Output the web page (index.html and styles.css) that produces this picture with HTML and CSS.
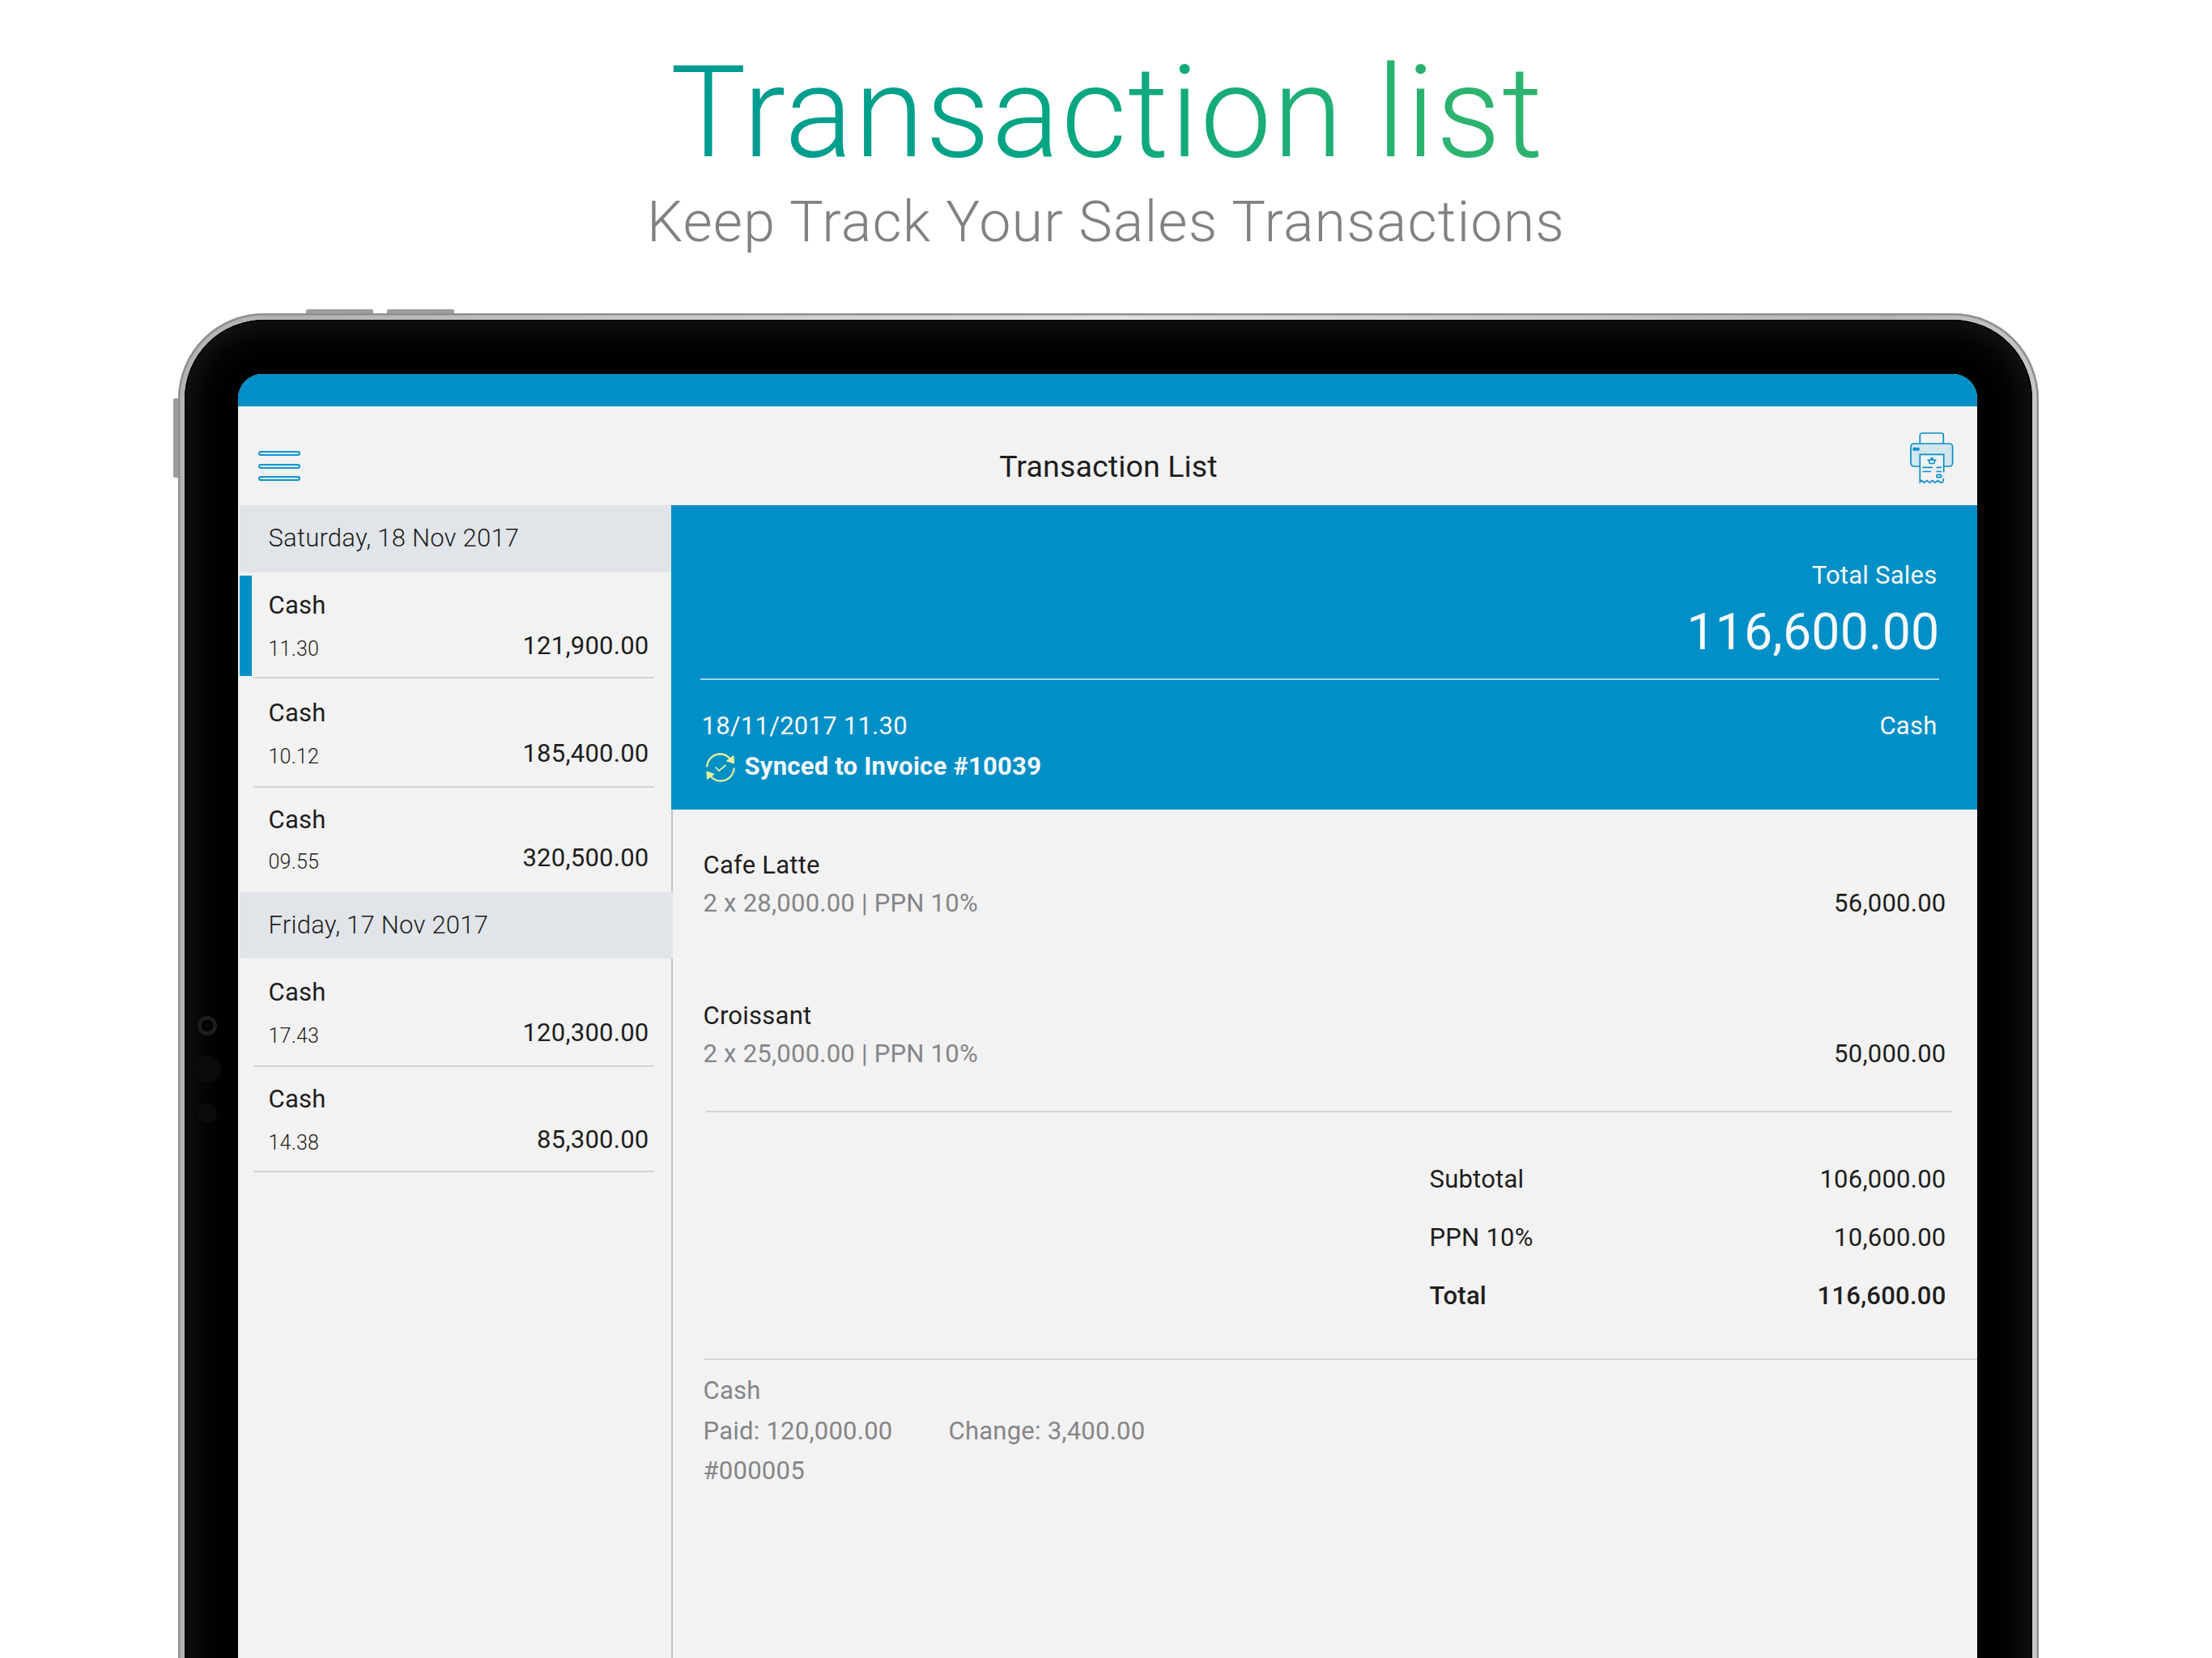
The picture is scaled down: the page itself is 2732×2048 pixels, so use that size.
FILE: index.html
```html
<!DOCTYPE html>
<html lang="en">
<head>
<meta charset="utf-8">
<title>Transaction list</title>
<link rel="stylesheet" href="styles.css">
</head>
<body>
<main class="promo">
  <header class="hero">
    <h1 class="hero-title">Transaction list</h1>
    <p class="hero-subtitle">Keep Track Your Sales Transactions</p>
  </header>

  <div class="tablet">
    <i class="key key-vol-up"></i>
    <i class="key key-vol-down"></i>
    <i class="key key-power"></i>
    <div class="bezel">
      <i class="lens"></i>
      <i class="sensor sensor-large"></i>
      <i class="sensor sensor-small"></i>
      <div class="screen">
        <div class="status-bar"></div>
        <nav class="app-bar">
          <span class="menu-icon"><i></i><i></i><i></i></span>
          <h2 class="app-title">Transaction List</h2>
          <svg class="print-icon" viewBox="0 0 54 64" fill="none" stroke="#0a8ecb" stroke-width="1.7">
            <path d="M12.3 14V4q0-3 3-3h23q3 0 3 3v10"/>
            <rect x="1" y="14" width="51.6" height="28" rx="4" fill="#d2e6ee"/>
            <path d="M12.3 27.3h29.4V61.5l-2.6-2.2-3.4 2.7-3.4-2.7-3.4 2.7-3.4-2.7-3.4 2.7-3.4-2.7-3.2 2.7-1.8-1.8z" fill="#f2f2f2" stroke="none"/>
            <path d="M41.7 49.500V27.300H12.300v34.200l2-2 3.200 2.700 3.400-2.700 3.400 2.700 3.400-2.700 3.400 2.700 3.400-2.700 3.400 2.700q3.300.5 3.300-3V57"/>
            <path d="M5.500 20.700h.1M9.600 20.700h.1" stroke-width="4.400" stroke-linecap="round"/>
            <path d="M5.500 20.700h4.100" stroke-width="2"/>
            <path d="M21.500 34.200h11M23 34.500l1.400 4h5.200l1.400-4M25.300 34l1.500-3M28.800 34l-1.500-3" stroke-width="1.6"/>
            <path d="M15.500 43.300h12.500M32.500 43.300h6.500M15.500 48.500h10.500M32.500 48.500h6.500"/>
            <rect x="33" y="52.300" width="5.600" height="3.400" rx="1"/>
          </svg>
        </nav>

        <div class="panes">
          <aside class="sidebar">
            <h3 class="day">Saturday, 18 Nov 2017</h3>
            <article class="entry entry-selected">
              <div class="entry-name">Cash</div>
              <div class="entry-line"><span class="entry-time">11.30</span><span class="entry-amount">121,900.00</span></div>
            </article>
            <article class="entry entry-second">
              <div class="entry-name">Cash</div>
              <div class="entry-line"><span class="entry-time">10.12</span><span class="entry-amount">185,400.00</span></div>
            </article>
            <article class="entry entry-last">
              <div class="entry-name">Cash</div>
              <div class="entry-line"><span class="entry-time">09.55</span><span class="entry-amount">320,500.00</span></div>
            </article>
            <h3 class="day day-earlier">Friday, 17 Nov 2017</h3>
            <article class="entry">
              <div class="entry-name">Cash</div>
              <div class="entry-line"><span class="entry-time">17.43</span><span class="entry-amount">120,300.00</span></div>
            </article>
            <article class="entry entry-short">
              <div class="entry-name">Cash</div>
              <div class="entry-line"><span class="entry-time">14.38</span><span class="entry-amount">85,300.00</span></div>
            </article>
          </aside>

          <section class="detail">
            <div class="summary">
              <div class="summary-total">
                <div class="summary-label">Total Sales</div>
                <div class="summary-value">116,600.00</div>
              </div>
              <div class="summary-meta"><span class="summary-date">18/11/2017 11.30</span><span>Cash</span></div>
              <div class="summary-sync">
                <svg class="sync-icon" viewBox="0 0 36 36" fill="none" stroke="#e9f29a" stroke-width="2.200">
                  <path d="M1.200 17.500C1.500 8 9 1.500 17.500 1.300c6 0 10 2.700 13 7"/>
                  <path d="M34.600 18.500C34.200 28 27 34.600 18 34.700c-5.500 0-10-2.600-12.800-6.500"/>
                  <path d="M34 3.500l.6 9.600-9.300-3.300z" fill="#e9f29a" stroke-width="1"/>
                  <path d="M1.500 32.500L.9 23l9.300 3.300z" fill="#e9f29a" stroke-width="1"/>
                  <path d="M11.500 17.500l4.600 4.500 8.400-7" stroke-width="1.700"/>
                </svg>
                <strong>Synced to Invoice #10039</strong>
              </div>
            </div>

            <div class="items">
              <div class="item">
                <div class="item-name">Cafe Latte</div>
                <div class="item-line"><span class="item-note">2 x 28,000.00 | PPN 10%</span><span>56,000.00</span></div>
              </div>
              <div class="item">
                <div class="item-name">Croissant</div>
                <div class="item-line"><span class="item-note">2 x 25,000.00 | PPN 10%</span><span>50,000.00</span></div>
              </div>
            </div>

            <div class="totals">
              <div class="totals-row"><span>Subtotal</span><span>106,000.00</span></div>
              <div class="totals-row"><span>PPN 10%</span><span>10,600.00</span></div>
              <div class="totals-row totals-final"><span>Total</span><span>116,600.00</span></div>
            </div>

            <div class="payment">
              <div>Cash</div>
              <div class="payment-line"><span class="payment-paid">Paid: 120,000.00</span><span>Change: 3,400.00</span></div>
              <div>#000005</div>
            </div>
          </section>
        </div>
      </div>
    </div>
  </div>
</main>
</body>
</html>
```
FILE: styles.css
```css
* { box-sizing: border-box; }

body {
  margin: 0;
  background: #fff;
  font-family: Roboto, "Liberation Sans", sans-serif;
  font-size: 31px;
  letter-spacing: 0.24px;
  color: #1e1e20;
}

h1, h2, h3, p { margin: 0; font-weight: 400; }
i { display: block; }

.promo {
  width: 2732px;
  height: 2048px;
  overflow: hidden;
  display: flex;
  flex-direction: column;
  align-items: center;
}

/* Heading */
.hero {
  flex: none;
  height: 387px;
  padding-top: 49px;
  display: flex;
  flex-direction: column;
  align-items: center;
}
.hero-title {
  padding-left: 3px;
  font-size: 157.5px;
  line-height: 180px;
  font-weight: 300;
  letter-spacing: 1.5px;
  background: linear-gradient(90deg, #009a94 0%, #00a386 36%, #2bb36f 88%);
  -webkit-background-clip: text;
  background-clip: text;
  color: transparent;
}
.hero-subtitle {
  margin-top: 5px;
  font-size: 70px;
  line-height: 80px;
  font-weight: 300;
  letter-spacing: 1.15px;
  color: #808184;
}

/* Tablet */
.tablet {
  position: relative;
  flex: none;
  width: 2298px;
  height: 1780px;
  margin-left: 5px;
  padding: 8px 8px 0;
  border-radius: 106px 106px 0 0;
  background: linear-gradient(90deg, #b4b4b6 0%, #b4b4b6 8%, #e2e2e3 50%, #b4b4b6 92%, #c8c8ca 100%);
  box-shadow: inset 0 0 0 2.500px #8f8f91;
}
.key { position: absolute; background: #9d9d9f; }
.key-vol-up { left: 158px; top: -5px; width: 83px; height: 5px; border-radius: 2px 2px 0 0; }
.key-vol-down { left: 258px; top: -5px; width: 83px; height: 5px; border-radius: 2px 2px 0 0; }
.key-power { left: -6px; top: 105px; width: 6px; height: 98px; border-radius: 2px 0 0 2px; }
.bezel {
  position: relative;
  height: 1780px;
  padding: 67px 68px 0 66px;
  border-radius: 98px 98px 0 0;
  background: #000;
  box-shadow: inset 0 0 0 1.500px #000, inset 0 0 50px #202020;
}
.lens {
  position: absolute;
  left: 16px;
  top: 860px;
  width: 24px;
  height: 24px;
  border-radius: 50%;
  background: radial-gradient(circle, #041c1e 0, #000 3px, #000 7px, #1d1d1d 7.500px);
}
.sensor { position: absolute; border-radius: 50%; background: #0b0b0b; }
.sensor-large { left: 12px; top: 909px; width: 33px; height: 33px; }
.sensor-small { left: 16px; top: 968px; width: 24px; height: 24px; }

/* App */
.screen {
  height: 1700px;
  overflow: hidden;
  border-radius: 30px 30px 0 0;
  background: #f2f2f2;
}
.status-bar { height: 40px; background: #008fc6; }
.app-bar {
  height: 122px;
  padding: 0 29px 0 25px;
  display: grid;
  grid-template-columns: 54px 1fr 54px;
  align-items: start;
}
.menu-icon { display: grid; gap: 9.500px; margin-top: 55px; }
.menu-icon i {
  width: 52px;
  height: 6px;
  border: 2px solid #1493d0;
  border-radius: 3px;
  background: #d5edf8;
}
.app-title {
  padding: 51px 0 0 7px;
  font-size: 37.500px;
  line-height: 46px;
  letter-spacing: 0.150px;
  text-align: center;
}
.print-icon { width: 54px; height: 64px; margin-top: 32px; }
.panes { display: flex; height: 1538px; }

/* Transaction history */
.sidebar {
  flex: none;
  width: 537px;
  padding-left: 2px;
  border-right: 2px solid #c4c4c6;
}
.day {
  height: 83px;
  margin-right: -2px;
  padding: 0 36px;
  font-size: 31px;
  line-height: 81px;
  font-weight: 300;
  background: #e1e5e9;
}
.day-earlier { height: 82px; }
.entry {
  height: 134px;
  margin: 0 21px 0 17px;
  padding: 24px 6px 0 19px;
  border-bottom: 2px solid #d4d4d6;
}
.entry-selected {
  height: 131px;
  margin-left: 0;
  padding-top: 23px;
  padding-left: 36px;
  border-bottom: 0;
  background:
    linear-gradient(#008fc6, #008fc6) 0 4px / 15px 124px no-repeat,
    linear-gradient(#d4d4d6, #d4d4d6) 17px 100% / 100% 2px no-repeat;
}
.entry-second { height: 135px; padding-top: 25px; }
.entry-last { height: 129px; border-bottom: 0; padding-top: 22px; }
.entry-last .entry-line { margin-top: 11px; }
.entry-last .entry-time { top: 3px; }
.entry-short { height: 130px; padding-top: 22px; }
.entry-name { font-size: 31px; line-height: 36px; }
.entry-line {
  display: flex;
  justify-content: space-between;
  align-items: baseline;
  margin-top: 14px;
  line-height: 36px;
}
.entry-time { font-size: 25px; font-weight: 300; position: relative; top: 2px; }

/* Transaction detail */
.detail { flex: 1; margin-left: -2px; }
.summary {
  height: 376px;
  padding: 67px 47px 0 36px;
  background: #008fc6;
  color: #f7f9fa;
}
.summary-total {
  height: 149px;
  border-bottom: 2px solid #a6d6ea;
  padding-right: 2px;
  text-align: right;
}
.summary-label { line-height: 40px; }
.summary-value {
  margin: 12px -3px 0 0;
  font-size: 62.500px;
  line-height: 76px;
  letter-spacing: 0.250px;
}
.summary-meta {
  display: flex;
  justify-content: space-between;
  padding: 37px 2px 0 2px;
  line-height: 40px;
}
.summary-sync {
  display: flex;
  align-items: center;
  gap: 12px;
  margin-top: 10px;
  padding-left: 7px;
  line-height: 40px;
}
.sync-icon { width: 36px; height: 36px; margin-top: 2px; }
.items {
  height: 374px;
  margin: 0 31px 0 43px;
  padding: 49px 7px 0 0;
  border-bottom: 2px solid #d4d4d6;
}
.item { height: 186px; margin-left: -3px; }
.item-name { line-height: 40px; }
.item-line { display: flex; justify-content: space-between; margin-top: 7px; line-height: 40px; }
.item-note { color: #858587; }
.totals {
  height: 306px;
  margin-left: 40px;
  padding: 63px 38px 0 897px;
  border-bottom: 2px solid #d4d4d6;
}
.totals-row { display: flex; justify-content: space-between; height: 72px; line-height: 40px; }
.totals-final { font-weight: 500; }
.payment { padding: 13px 40px; line-height: 49.500px; color: #858587; }
.payment-line { display: flex; gap: 69px; }
```
